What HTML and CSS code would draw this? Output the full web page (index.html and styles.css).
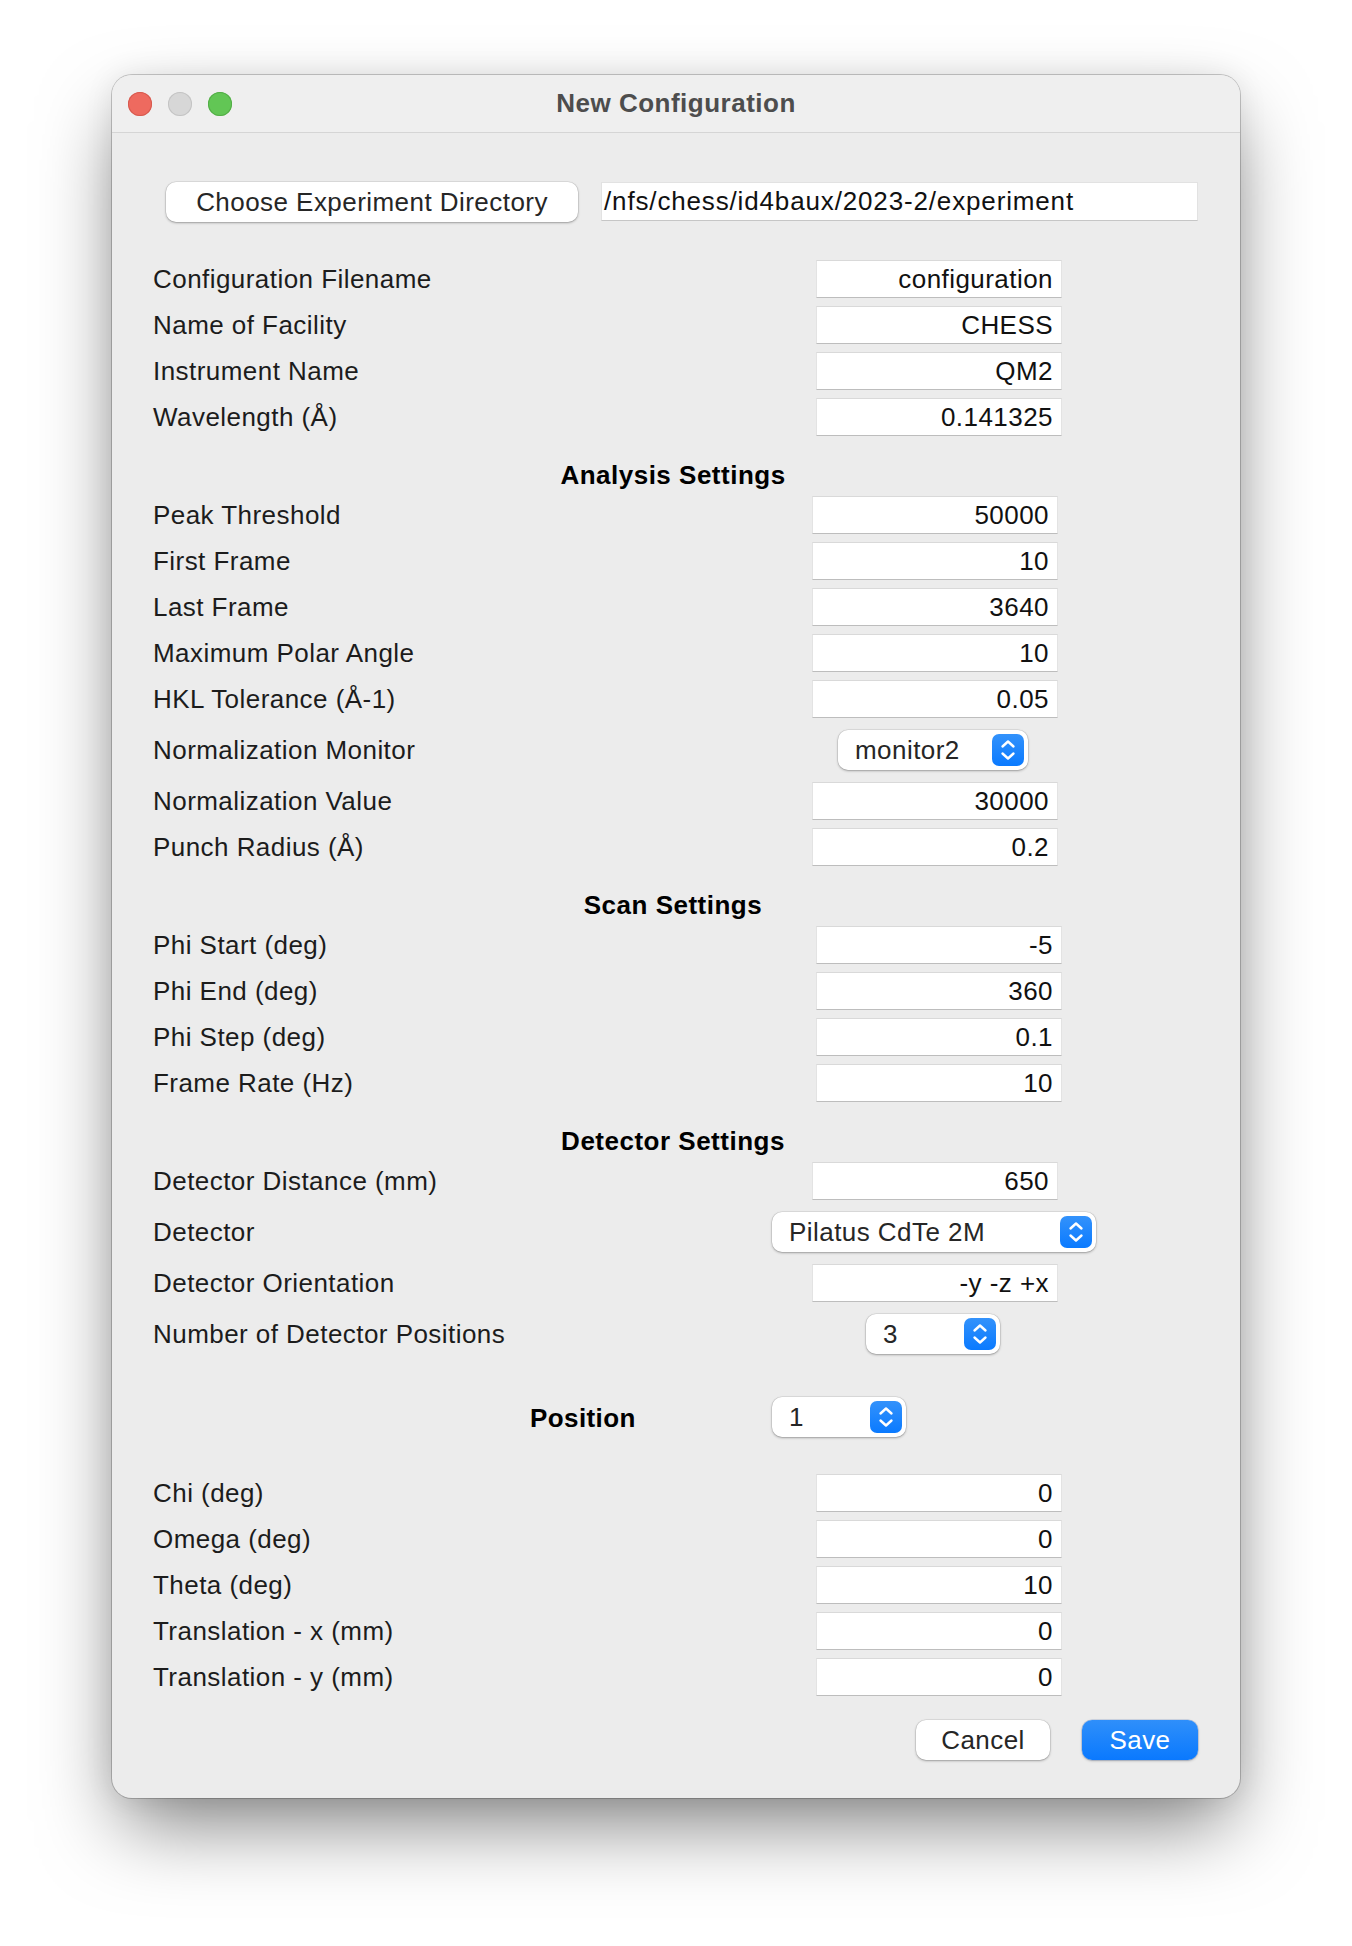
FILE: index.html
```html
<!DOCTYPE html>
<html lang="en">
<head>
<meta charset="utf-8">
<title>New Configuration</title>
<link rel="stylesheet" href="styles.css">
</head>
<body>
<div class="window">
  <div class="titlebar">
    <div class="lights">
      <span class="light red"></span>
      <span class="light gray"></span>
      <span class="light green"></span>
    </div>
    <div class="title">New Configuration</div>
    <div></div>
  </div>

  <div class="dir-row">
    <div class="btn btn-dir">Choose Experiment Directory</div>
    <div class="path">/nfs/chess/id4baux/2023-2/experiment</div>
  </div>

  <div class="form">
    <div class="row"><span class="label">Configuration Filename</span><div class="field fa">configuration</div></div>
    <div class="row"><span class="label">Name of Facility</span><div class="field fa">CHESS</div></div>
    <div class="row"><span class="label">Instrument Name</span><div class="field fa">QM2</div></div>
    <div class="row"><span class="label">Wavelength (Å)</span><div class="field fa">0.141325</div></div>

    <div class="heading">Analysis Settings</div>
    <div class="row"><span class="label">Peak Threshold</span><div class="field fb">50000</div></div>
    <div class="row"><span class="label">First Frame</span><div class="field fb">10</div></div>
    <div class="row"><span class="label">Last Frame</span><div class="field fb">3640</div></div>
    <div class="row"><span class="label">Maximum Polar Angle</span><div class="field fb">10</div></div>
    <div class="row"><span class="label">HKL Tolerance (Å-1)</span><div class="field fb">0.05</div></div>
    <div class="row row-pop"><span class="label">Normalization Monitor</span>
      <div class="popup pop-monitor"><span class="pop-text">monitor2</span><span class="stepper"><svg viewBox="0 0 32 32" width="32" height="32"><polyline points="10.5,12.5 16,7.5 21.5,12.5"/><polyline points="10.5,19.5 16,24.5 21.5,19.5"/></svg></span></div>
    </div>
    <div class="row"><span class="label">Normalization Value</span><div class="field fb">30000</div></div>
    <div class="row"><span class="label">Punch Radius (Å)</span><div class="field fb">0.2</div></div>

    <div class="heading">Scan Settings</div>
    <div class="row"><span class="label">Phi Start (deg)</span><div class="field fa">-5</div></div>
    <div class="row"><span class="label">Phi End (deg)</span><div class="field fa">360</div></div>
    <div class="row"><span class="label">Phi Step (deg)</span><div class="field fa">0.1</div></div>
    <div class="row"><span class="label">Frame Rate (Hz)</span><div class="field fa">10</div></div>

    <div class="heading">Detector Settings</div>
    <div class="row"><span class="label">Detector Distance (mm)</span><div class="field fb">650</div></div>
    <div class="row row-pop"><span class="label">Detector</span>
      <div class="popup pop-detector"><span class="pop-text">Pilatus CdTe 2M</span><span class="stepper"><svg viewBox="0 0 32 32" width="32" height="32"><polyline points="10.5,12.5 16,7.5 21.5,12.5"/><polyline points="10.5,19.5 16,24.5 21.5,19.5"/></svg></span></div>
    </div>
    <div class="row"><span class="label">Detector Orientation</span><div class="field fb">-y -z +x</div></div>
    <div class="row row-pop"><span class="label">Number of Detector Positions</span>
      <div class="popup pop-num"><span class="pop-text">3</span><span class="stepper"><svg viewBox="0 0 32 32" width="32" height="32"><polyline points="10.5,12.5 16,7.5 21.5,12.5"/><polyline points="10.5,19.5 16,24.5 21.5,19.5"/></svg></span></div>
    </div>
  </div>

  <div class="row position-row">
    <span class="label pos-label">Position</span>
    <div class="popup pop-pos"><span class="pop-text">1</span><span class="stepper"><svg viewBox="0 0 32 32" width="32" height="32"><polyline points="10.5,12.5 16,7.5 21.5,12.5"/><polyline points="10.5,19.5 16,24.5 21.5,19.5"/></svg></span></div>
  </div>

  <div class="form form-pos">
    <div class="row"><span class="label">Chi (deg)</span><div class="field fa">0</div></div>
    <div class="row"><span class="label">Omega (deg)</span><div class="field fa">0</div></div>
    <div class="row"><span class="label">Theta (deg)</span><div class="field fa">10</div></div>
    <div class="row"><span class="label">Translation - x (mm)</span><div class="field fa">0</div></div>
    <div class="row"><span class="label">Translation - y (mm)</span><div class="field fa">0</div></div>
  </div>

  <div class="actions">
    <div class="btn btn-cancel">Cancel</div>
    <div class="btn btn-save">Save</div>
  </div>
</div>
</body>
</html>
```

FILE: styles.css
```css
* { box-sizing: border-box; }

html, body {
  margin: 0;
  padding: 0;
}

body {
  background: #ffffff;
  min-height: 1946px;
  font-family: "Liberation Sans", Arial, sans-serif;
  font-size: 26px;
  letter-spacing: 0.45px;
  color: #1c1c1c;
  overflow: hidden;
}

.window {
  width: 1128px;
  margin: 75px 0 0 112px;
  background: #ececec;
  border-radius: 20px;
  padding-bottom: 38px;
  box-shadow:
    0 0 0 1px rgba(0, 0, 0, 0.2),
    0 35px 80px -10px rgba(0, 0, 0, 0.5),
    0 0 30px rgba(0, 0, 0, 0.08);
}

/* ---------- title bar ---------- */
.titlebar {
  height: 58px;
  border-bottom: 1px solid #d5d5d5;
  background: #efefef;
  border-radius: 20px 20px 0 0;
  display: grid;
  grid-template-columns: 1fr auto 1fr;
  align-items: center;
}

.lights {
  display: flex;
  gap: 16px;
  padding-left: 16px;
}

.light {
  width: 24px;
  height: 24px;
  border-radius: 50%;
  display: block;
}
.light.red { background: #ee6a5f; box-shadow: inset 0 0 0 1px #d65a4f; }
.light.gray { background: #d7d7d7; box-shadow: inset 0 0 0 1px #c4c4c4; }
.light.green { background: #62c655; box-shadow: inset 0 0 0 1px #53ad47; }

.title {
  font-weight: bold;
  color: #4d4d4d;
  letter-spacing: 0.5px;
}

/* ---------- directory row ---------- */
.dir-row {
  display: flex;
  align-items: flex-start;
  gap: 23px;
  margin: 49px 42px 0 54px;
}

.btn {
  height: 40px;
  border-radius: 10px;
  background: #ffffff;
  color: #262626;
  display: flex;
  align-items: center;
  justify-content: center;
  box-shadow: 0 0 0 0.5px rgba(0, 0, 0, 0.12), 0 1px 2.5px rgba(0, 0, 0, 0.3);
}

.btn-dir { width: 412px; }

.path {
  flex: 1;
  height: 39px;
  background: #ffffff;
  border: 1px solid #e2e2e2;
  border-bottom-color: #c6c6c6;
  color: #111;
  padding-left: 2px;
  display: flex;
  align-items: center;
  letter-spacing: 0.85px;
}

/* ---------- form rows ---------- */
.form {
  display: flex;
  flex-direction: column;
  gap: 8px;
  margin-top: 38px;
  padding-left: 41px;
}

.row {
  display: grid;
  grid-template-columns: 619px 324px;
  align-items: center;
  height: 38px;
}

.row-pop { height: 48px; }

.label { white-space: nowrap; }

.field {
  width: 246px;
  height: 38px;
  background: #ffffff;
  border: 1px solid #e3e3e3;
  border-top-color: #d9d9d9;
  border-bottom-color: #bdbdbd;
  color: #111;
  display: flex;
  align-items: center;
  justify-content: flex-end;
  padding-right: 8px;
}
.field.fa { margin-left: 44px; }
.field.fb { margin-left: 40px; }

.heading {
  height: 44px;
  padding-top: 19px;
  padding-right: 6px;
  line-height: 25px;
  font-weight: bold;
  color: #000;
  text-align: center;
  margin-left: -41px;
  letter-spacing: 0.5px;
}

/* ---------- pop-up buttons ---------- */
.popup {
  height: 40px;
  border-radius: 10px;
  background: #ffffff;
  box-shadow: 0 0 0 0.5px rgba(0, 0, 0, 0.12), 0 1px 2.5px rgba(0, 0, 0, 0.3);
  display: flex;
  align-items: center;
  justify-content: space-between;
  padding: 0 4px 0 17px;
  color: #262626;
}
.pop-monitor { width: 190px; margin-left: 66px; }
.pop-detector { width: 324px; margin-left: 0; }
.pop-num { width: 134px; margin-left: 94px; }
.pop-pos { width: 134px; margin-left: 0; }

.stepper {
  width: 32px;
  height: 32px;
  border-radius: 7px;
  background: linear-gradient(#3392fb, #0a7aff);
  display: block;
}
.stepper svg { display: block; }
.stepper polyline {
  fill: none;
  stroke: #ffffff;
  stroke-width: 2.4;
  stroke-linecap: round;
  stroke-linejoin: round;
}

/* ---------- position ---------- */
.position-row {
  height: 40px;
  margin-top: 39px;
  padding-left: 41px;
  grid-template-columns: 619px 324px;
}
.pos-label {
  font-weight: bold;
  color: #000;
  padding-left: 377px;
  padding-top: 3px;
  letter-spacing: 0.4px;
}

.form-pos { margin-top: 37px; }

/* ---------- actions ---------- */
.actions {
  display: flex;
  justify-content: flex-end;
  gap: 32px;
  margin: 24px 42px 0 0;
}
.btn-cancel { width: 134px; }
.btn-save {
  width: 116px;
  color: #ffffff;
  background: linear-gradient(#2f8ffa, #0a79fe);
  box-shadow: 0 0 0 0.5px rgba(0, 60, 160, 0.25), 0 1px 2.5px rgba(0, 0, 0, 0.25);
}
```
